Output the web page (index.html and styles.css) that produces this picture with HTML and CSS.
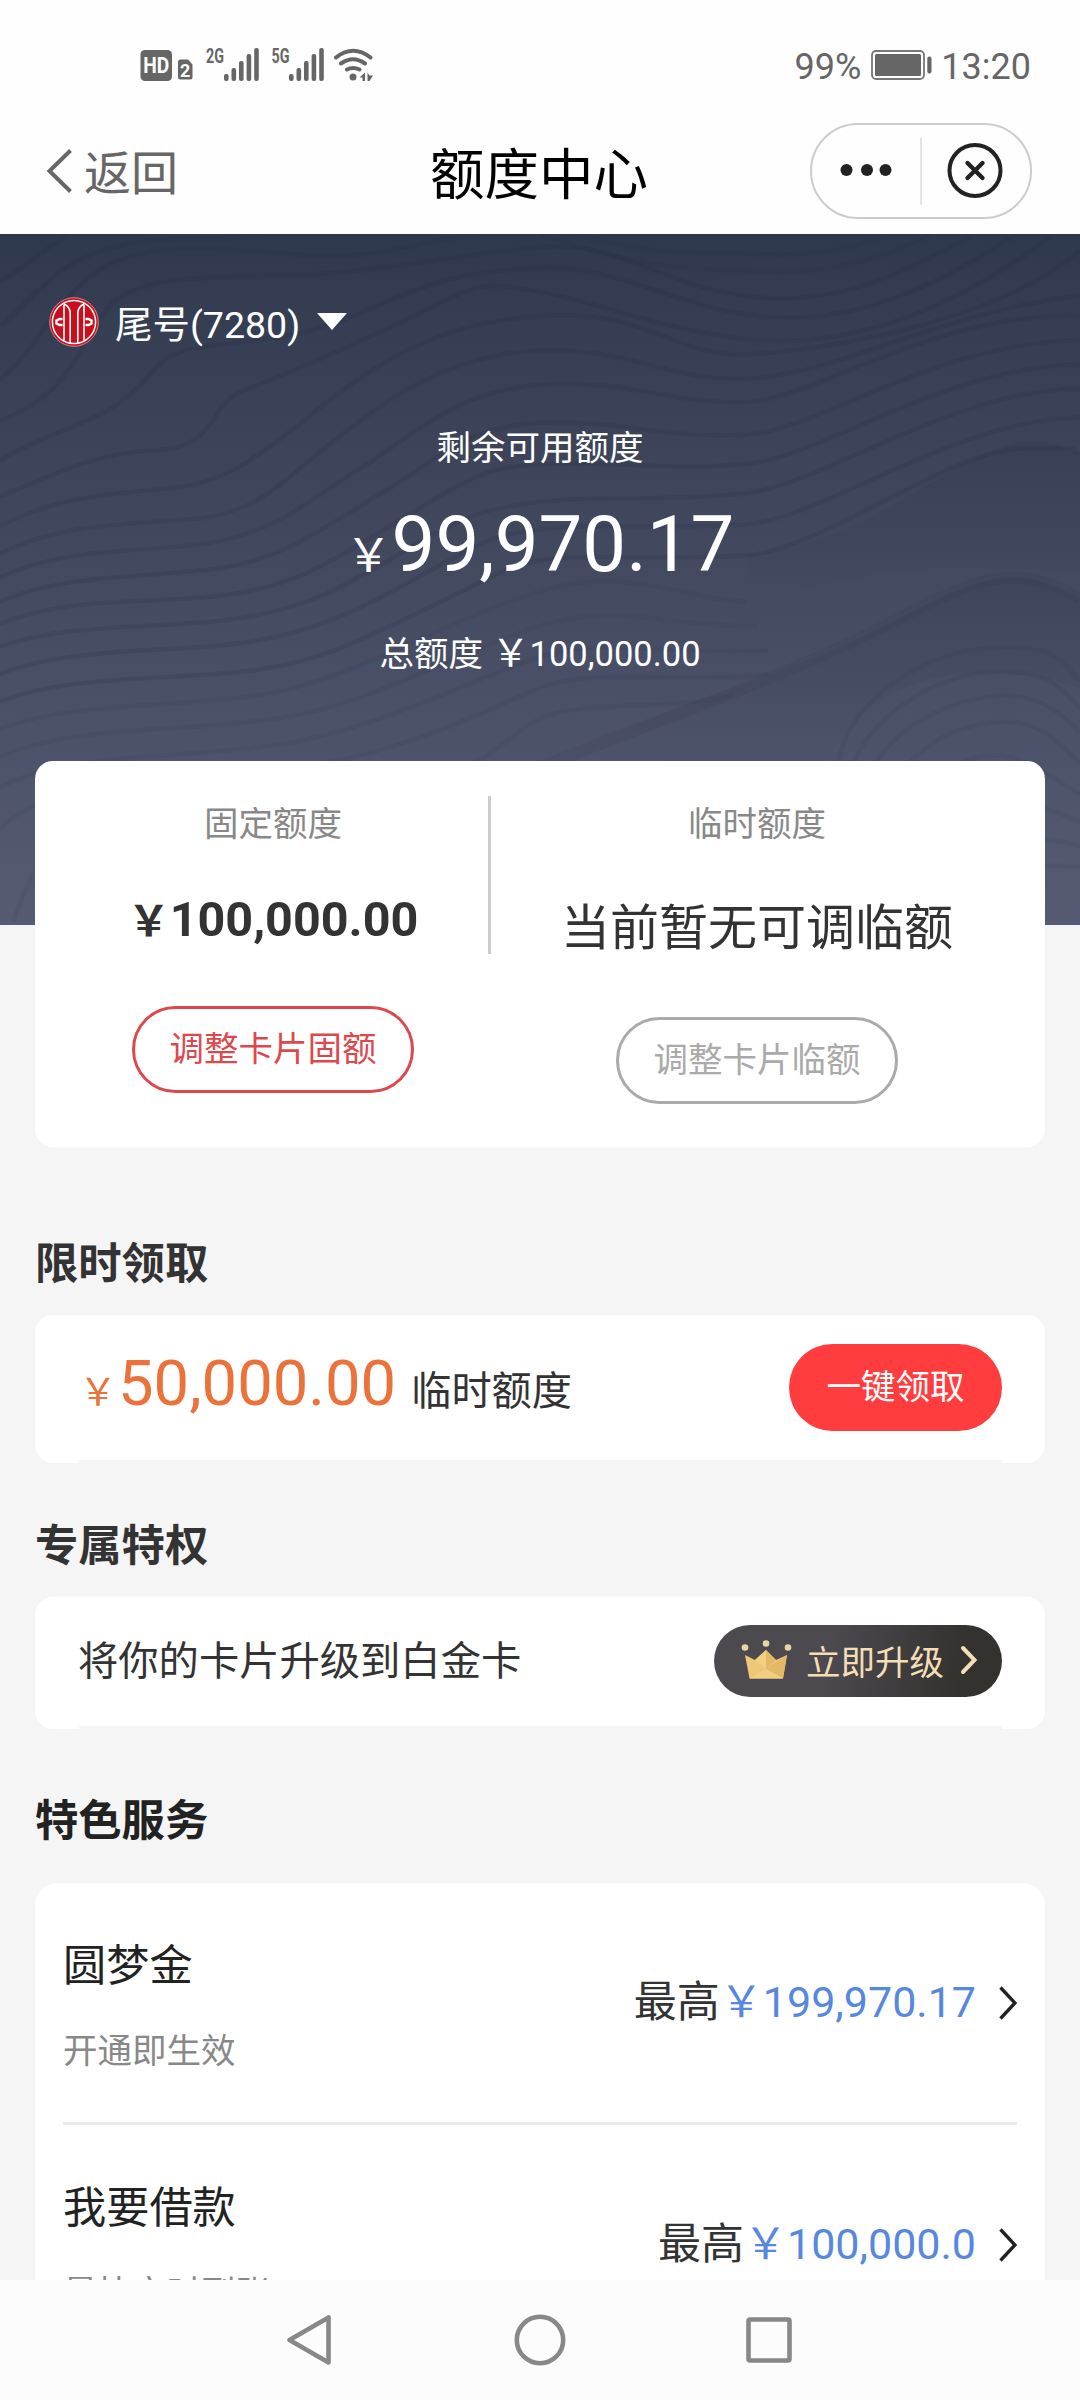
FILE: index.html
```html
<!DOCTYPE html>
<html lang="zh-CN">
<head>
<meta charset="utf-8">
<title>额度中心</title>
<link rel="stylesheet" href="styles.css">
</head>
<body>
<div class="screen">
  <div class="status">
    <svg class="status-icons" width="240" height="40" viewBox="137 45 240 40" fill="#666">
      <rect x="140.500" y="50" width="31.500" height="31" rx="4.500"/>
      <text x="156.200" y="73" class="hd-label" textLength="26" lengthAdjust="spacingAndGlyphs">HD</text>
      <path d="M181 59.500h7l4.500 5v12.500a2.500 2.500 0 0 1-2.500 2.500h-9.500a2.500 2.500 0 0 1-2.500-2.500V62a2.500 2.500 0 0 1 3-2.500z"/>
      <text x="185.200" y="76.500" class="sim-label">2</text>
      <text x="206" y="63" class="net-label" textLength="18" lengthAdjust="spacingAndGlyphs">2G</text>
      <g id="bars"><rect x="224" y="74" width="4.600" height="7" rx="2"/><rect x="231.500" y="68" width="4.600" height="13" rx="2"/><rect x="239" y="61" width="4.600" height="20" rx="2"/><rect x="246.600" y="54" width="4.600" height="27" rx="2"/><rect x="254.200" y="48" width="4.600" height="33" rx="2"/></g>
      <text x="271.500" y="63" class="net-label" textLength="18" lengthAdjust="spacingAndGlyphs">5G</text>
      <use href="#bars" x="65"/>
      <g fill="none" stroke="#666" stroke-width="4" stroke-linecap="round"><path d="M336 57.500Q353 44 370.500 57.500M341 63.500Q353 55 365 63.500M347 69.500Q353 66.500 359.500 69.500"/></g>
      <circle cx="353" cy="77" r="3.500"/>
      <path d="M365 72.500v8.500h-2.500v-3.500h-3zM367.500 72.500l2 3h3.500l-3.500 5.500h-2z"/>
    </svg>
    <div class="status-right">
      <span>99%</span>
      <svg width="61" height="30" viewBox="0 0 61 30"><rect x="1" y="1" width="52" height="28" rx="4" fill="#fff" stroke="#777" stroke-width="1.800"/><rect x="4" y="4" width="46" height="22" rx="1.500" fill="#666"/><rect x="56.300" y="6.500" width="4.200" height="17" rx="2" fill="#666"/></svg>
      <span>13:20</span>
    </div>
  </div>

  <header class="topbar">
    <div class="back">
      <svg width="27" height="44" viewBox="0 0 27 44" fill="none" stroke="#666" stroke-width="4"><path d="M24.500 1.500L3.500 22L24.500 42.500"/></svg>
      <span>返回</span>
    </div>
    <h1 class="title">额度中心</h1>
    <div class="capsule">
      <svg class="more" width="108" height="92" viewBox="0 0 108 92" fill="#222"><circle cx="34.500" cy="45" r="6"/><circle cx="55" cy="45" r="6"/><circle cx="73.500" cy="45" r="6"/></svg>
      <i class="capsule-line"></i>
      <svg width="106" height="92" viewBox="0 0 106 92" fill="none" stroke="#222" stroke-width="4" stroke-linecap="round"><circle cx="53" cy="45.500" r="25.500"/><path d="M45.500 38L60.500 53M60.500 38L45.500 53" stroke-width="4.400"/></svg>
    </div>
  </header>

  <section class="hero">
    <svg class="waves" viewBox="0 12 3136 2007" preserveAspectRatio="none" fill="none">
      <defs>
        <linearGradient id="shade" x1="0" y1="0" x2="0" y2="1"><stop offset="0" stop-color="#282c46" stop-opacity=".18"/><stop offset="1" stop-color="#282c46" stop-opacity="0"/></linearGradient>
      </defs>
      <path fill="url(#shade)" d="M2168 945C2450 920 2640 760 2818 670S3050 620 3136 650V1000C2700 950 2450 1000 2168 1100Z"/>
      <path fill="url(#shade)" d="M1568 1530C1900 1400 2300 1290 2568 1150S2940 960 3136 1070V1330C2750 1220 2500 1330 2400 1560Z"/>
      <g class="lines">
        <path d="M0 150C90 100 120 60 200 12"/>
        <path d="M0 280C100 200 160 90 330 50S600 40 760 12"/>
        <path d="M0 435C120 340 150 200 300 110S700 60 900 75S1250 20 1400 12"/>
        <path d="M0 555C240 460 230 300 330 210S700 140 900 130S1350 70 1568 50S1900 150 2150 190S2600 140 2830 12"/>
        <path d="M0 670C130 590 250 570 350 500S440 370 560 345S850 330 1050 240S1350 120 1568 110S1950 220 2200 250S2700 180 2950 12"/>
        <path d="M0 775C160 710 260 650 450 640S600 510 700 470S1000 350 1200 250S1400 150 1568 180S1950 300 2200 320S2750 250 3060 12"/>
        <path d="M0 860C180 770 340 765 500 750S760 650 900 540S1230 270 1568 250S1950 380 2200 360S2900 260 3136 60"/>
        <path d="M0 940C180 850 380 855 560 840S810 740 960 620S1300 360 1568 350S1950 450 2200 430S2700 250 3136 190"/>
        <path d="M0 1010C180 920 400 940 600 910S890 790 1050 690S1320 470 1568 450S1960 510 2168 500S2700 240 3136 250"/>
        <path d="M0 1080C180 1000 420 1010 620 985S930 870 1100 770S1350 570 1568 560S1950 610 2168 595S2700 330 3136 320"/>
        <path d="M0 1145C200 1060 440 1090 660 1060S980 950 1150 850S1380 690 1568 680S1950 700 2168 680S2730 400 3136 390"/>
        <path d="M0 1210C200 1140 460 1160 680 1130S1010 1030 1180 930S1400 810 1568 790S1950 790 2168 765S2750 470 3136 460"/>
        <path d="M0 1290C200 1210 480 1230 700 1200S1050 1100 1230 1000S1420 890 1568 870S1950 870 2168 855S2770 550 3136 545"/>
        <path d="M0 1370C200 1290 500 1310 730 1280S1090 1170 1280 1080S1460 980 1568 960S1950 960 2168 945S2750 640 2968 635S3090 640 3136 650"/>
      </g>
      <g class="lines faint">
        <path d="M1568 12C1900 130 2050 110 2200 120S2550 100 2700 12"/>
        <path d="M1680 12C1950 90 2050 60 2200 70S2500 50 2580 12"/>
        <path d="M0 1450C200 1370 500 1390 760 1350S1300 1130 1568 1050S2000 1080 2168 1080"/>
        <path d="M0 1530C200 1440 520 1460 800 1420S1340 1220 1568 1150S1980 1160 2200 1150"/>
        <path d="M0 1620C200 1510 560 1540 840 1490S1380 1300 1568 1240S1980 1240 2230 1220"/>
        <path d="M0 1740C180 1560 560 1610 880 1560S1420 1390 1568 1330S1960 1320 2230 1290"/>
        <path d="M40 2010C120 1700 400 1650 900 1640S1440 1480 1568 1420S1960 1400 2130 1350"/>
        <path d="M2435 1560C2440 1400 2650 1230 2868 1215S3080 1260 3136 1310"/>
        <path d="M2470 1570C2520 1420 2700 1300 2868 1285S3080 1330 3136 1390"/>
        <path d="M2530 1570C2600 1440 2750 1370 2880 1355S3080 1400 3136 1460"/>
        <path d="M2620 1570C2700 1480 2780 1440 2890 1430S3060 1470 3136 1550"/>
        <path d="M2700 1600C2900 1450 3000 1560 3136 1640M2850 1700C2950 1640 3050 1680 3136 1720M2850 1780Q3000 1750 3136 1790M2850 1860Q3000 1840 3136 1850"/>
      </g>
      <path class="ridge" d="M1568 1560C1900 1430 2300 1290 2568 1150S2940 960 3136 1070"/>
    </svg>
    <div class="account">
      <svg width="50" height="50" viewBox="0 0 50 50">
        <circle cx="25" cy="25" r="24.300" fill="#c80f1e" stroke="#d9828c" stroke-width="1"/>
        <circle cx="25" cy="25" r="21.600" fill="none" stroke="#fff" stroke-width="1.500"/>
        <g fill="none" stroke="#fff" stroke-width="1.600"><path d="M14.500 6.500Q21.200 10 21.200 16V46M15 8V43.500M35.500 6.500Q28.800 10 28.800 16V46M35 8V43.500"/></g>
        <path d="M13.500 22H10.500L7.500 23.500V26.500L10.500 28H13.500M36.500 22H39.500L42.500 23.500V26.500L39.500 28H36.500" fill="none" stroke="#fff" stroke-width="2.400"/>
      </svg>
      <span class="account-no">尾号(7280)</span>
      <i class="caret"></i>
    </div>
    <div class="avail-label">剩余可用额度</div>
    <div class="avail"><span class="yen">￥</span><span>99,970.17</span></div>
    <div class="total">总额度 <span class="yen">￥</span>100,000.00</div>
  </section>

  <main class="content">
    <section class="card limits">
      <div class="limit">
        <div class="limit-label">固定额度</div>
        <div class="limit-value"><span class="yen">￥</span>100,000.00</div>
        <button class="pill red">调整卡片固额</button>
      </div>
      <i class="limit-line"></i>
      <div class="limit">
        <div class="limit-label">临时额度</div>
        <div class="limit-none">当前暂无可调临额</div>
        <button class="pill gray">调整卡片临额</button>
      </div>
    </section>

    <h2 class="heading">限时领取</h2>
    <section class="card claim">
      <div class="claim-text"><span class="yen">￥</span><span class="claim-sum">50,000.00</span><span>临时额度</span></div>
      <button class="claim-btn">一键领取</button>
    </section>

    <h2 class="heading">专属特权</h2>
    <section class="card upgrade">
      <span class="upgrade-text">将你的卡片升级到白金卡</span>
      <button class="upgrade-btn">
        <svg width="51" height="40" viewBox="0 0 51 40">
          <path d="M4 15L14 20L25 10L35 20L46 15L42 38.500H8.500Z" fill="#ecc877"/>
          <path d="M25 10L35 20L25 29ZM46 15L42 38.500L25 29Z" fill="#e3b966"/><path d="M25 10L14 20L25 29ZM8.500 38.500H42L25 29Z" fill="#f1d084"/>
          <circle cx="4" cy="7.500" r="3.300" fill="#ecd5a4"/><circle cx="25" cy="3.500" r="3.300" fill="#ecd5a4"/><circle cx="47" cy="7.500" r="3.300" fill="#ecd5a4"/>
        </svg>
        <span>立即升级</span>
        <svg width="18" height="30" viewBox="0 0 18 30" fill="none" stroke="#f3deb5" stroke-width="4" stroke-linecap="round"><path d="M3 3L14.500 15L3 27"/></svg>
      </button>
    </section>

    <h2 class="heading services-heading">特色服务</h2>
    <section class="card services">
      <div class="service">
        <div><div class="service-name">圆梦金</div><div class="service-note">开通即生效</div></div>
        <div class="service-max">最高<span class="blue">￥199,970.17</span>
          <svg width="18" height="34" viewBox="0 0 18 34" fill="none" stroke="#222" stroke-width="3.400"><path d="M1.500 1.500L16 17L1.500 32.500"/></svg></div>
      </div>
      <div class="service">
        <div><div class="service-name">我要借款</div><div class="service-note">最快实时到账</div></div>
        <div class="service-max">最高<span class="blue">￥100,000.0</span>
          <svg width="18" height="34" viewBox="0 0 18 34" fill="none" stroke="#222" stroke-width="3.400"><path d="M1.500 1.500L16 17L1.500 32.500"/></svg></div>
      </div>
    </section>
  </main>

  <nav class="navbar">
    <svg width="50" height="56" viewBox="0 0 50 56"><path d="M42.500 5.500V50.500L3.500 28Z"/></svg>
    <svg width="56" height="56" viewBox="0 0 56 56"><circle cx="28" cy="28" r="23.200"/></svg>
    <svg width="50" height="56" viewBox="0 0 50 56"><rect x="4.500" y="7.500" width="41" height="41" rx="1.500"/></svg>
  </nav>
</div>
</body>
</html>
```
FILE: styles.css
```css
* { box-sizing: border-box; margin: 0; padding: 0; }
body { background: #f5f5f5; }
.screen {
  width: 1080px; height: 2400px; overflow: hidden;
  display: flex; flex-direction: column;
  font-family: Roboto, "Noto Sans CJK SC", sans-serif;
  font-size: 34.5px; color: #333; background: #f5f5f5;
}
svg { display: block; flex: none; }
button { font: inherit; border: 0; background: none; }

.status {
  height: 106px; flex: none; padding: 24px 49px 0 137px; background: #fefefe;
  display: flex; justify-content: space-between; align-items: center;
}
.status-right { display: flex; align-items: center; gap: 9.500px; font-size: 36px; line-height: 40px; color: #666; }
.status-right span { padding-top: 3px; }
.hd-label { font: 700 22px Roboto, sans-serif; fill: #fff; text-anchor: middle; }
.sim-label { font: 700 18px Roboto, sans-serif; fill: #fff; text-anchor: middle; }
.net-label { font: 700 21px Roboto, sans-serif; }

.topbar {
  height: 128px; flex: none; padding: 17px 48px 0 46px; background: #fefefe;
  display: grid; grid-template-columns: 1fr auto 1fr; align-items: start;
}
.back { display: flex; align-items: center; gap: 11px; height: 96px; font-size: 47px; color: #666; }
.back span { padding-bottom: 4px; }
.title { font-size: 54.500px; font-weight: 400; line-height: 105px; color: #000; }
.capsule {
  justify-self: end; width: 222px; height: 96px; border: 2px solid #ccc; border-radius: 48px;
  display: flex; align-items: center;
}
.capsule-line { width: 1.500px; height: 67px; background: #e4e4e4; }

.hero {
  position: relative; height: 691px; flex: none; color: #fff;
  background: linear-gradient(#2f394d 0%, #3a4156 22%, #434a60 48%, #4c5269 72%, #565b73 100%);
}
.waves { position: absolute; inset: 0; width: 100%; height: 100%; }
.lines { stroke: #262a42; stroke-opacity: .17; stroke-width: 13; }
.faint { stroke-opacity: .09; }
.ridge { stroke: #262a42; stroke-opacity: .08; stroke-width: 34; }
.account { position: relative; display: flex; align-items: center; height: 50px; margin: 0 49px; top: 63px; }
.account-no { margin-left: 16px; padding-top: 5px; font-size: 37.500px; line-height: 50px; }
.caret { margin-left: 17px; margin-top: -1px; border: 15px solid transparent; border-top: 17px solid #fff; border-bottom: 0; }
.avail-label, .avail, .total { position: relative; text-align: center; }
.avail-label { margin-top: 137px; line-height: 54px; }
.avail { margin-top: 18px; font-size: 78px; line-height: 104px; }
.avail .yen { font-size: 46px; }
.total { margin-top: 11px; line-height: 70px; }
.total .yen { font-size: 38px; }

.content { flex: 1; min-height: 0; overflow: hidden; padding: 0 35px; position: relative; margin-top: -164px; }
.card { background: #fff; border-radius: 18px; }
.limits { height: 386px; padding: 35px 22px 0 23px; display: flex; align-items: flex-start; }
.limit { flex: 1; display: flex; flex-direction: column; align-items: center; }
.limit:first-child { flex: 0 0 430px; }
.limit-line { width: 3px; height: 158px; background: #ccc; }
.limit-label { line-height: 56px; color: #888; }
.limit-value { margin-top: 33px; font-size: 48.500px; line-height: 70px; font-weight: 700; }
.limit-value .yen { font-size: 42px; }
.limit-none { margin-top: 41px; font-size: 49px; line-height: 72px; }
.pill { width: 282px; height: 87px; margin-top: 50px; border: 3px solid; border-radius: 44px; padding-bottom: 7px; }
.limit-value + .pill { margin-top: 49px; }
.limit-none + .pill { margin-top: 52px; }
.red { color: #dd484d; }
.gray { color: #aaa; }

.heading { font-size: 43.300px; line-height: 64px; font-weight: 700; margin-top: 86px; }
.claim, .upgrade { position: relative; margin-top: 18px; display: flex; justify-content: space-between; padding: 29px 43px 0 44px; }
.claim { height: 148px; }
.upgrade { height: 132px; padding-top: 28px; }
.claim::after, .upgrade::after { content: ""; position: absolute; left: 44px; right: 43px; bottom: 0; height: 3px; background: #f5f5f5; }
.claim-text { display: flex; align-items: baseline; font-size: 40.200px; line-height: 79px; }
.claim .yen { font-size: 38px; color: #ec723b; margin-right: 1px; }
.claim-sum { font-size: 63.300px; color: #ec723b; margin-right: 15px; }
.claim-btn { width: 213px; height: 87px; border-radius: 44px; background: #ff3d3f; color: #fff; padding-bottom: 7px; }
.claim + .heading { margin-top: 52px; }
.upgrade-text { font-size: 40.300px; line-height: 74px; margin-left: -1px; }
.upgrade-btn {
  width: 288px; height: 72px; border-radius: 36px; padding-left: 27px; color: #f3deb5;
  background: linear-gradient(100deg, #4c494f 0%, #4c494f 40%, #33322f 85%);
  display: flex; align-items: center;
}
.upgrade-btn svg { margin-bottom: 2px; }
.upgrade-btn span { margin: 0 16px 0 14px; padding-bottom: 3px; }
.upgrade + .services-heading { margin-top: 61px; color: #222; }
.services { margin-top: 29px; padding: 0 28px; border-radius: 22px; }
.service { display: flex; justify-content: space-between; height: 242px; border-bottom: 3px solid #ebebeb; }
.service-name { margin-top: 52px; font-size: 43.200px; line-height: 64px; color: #222; }
.service-note { margin-top: 24px; line-height: 56px; color: #888; }
.service-max { height: 64px; margin-top: 87px; display: flex; align-items: center; font-size: 43px; line-height: 64px; }
.service-max svg { margin-left: 23px; margin-top: 1px; }
.blue { color: #5887de; }

.navbar { height: 120px; flex: none; background: #fcfcfc; display: flex; justify-content: space-between; padding: 32px 286px 0; position: relative; }
.navbar svg { fill: none; stroke: #888; stroke-width: 4.600; stroke-linejoin: round; }
```
